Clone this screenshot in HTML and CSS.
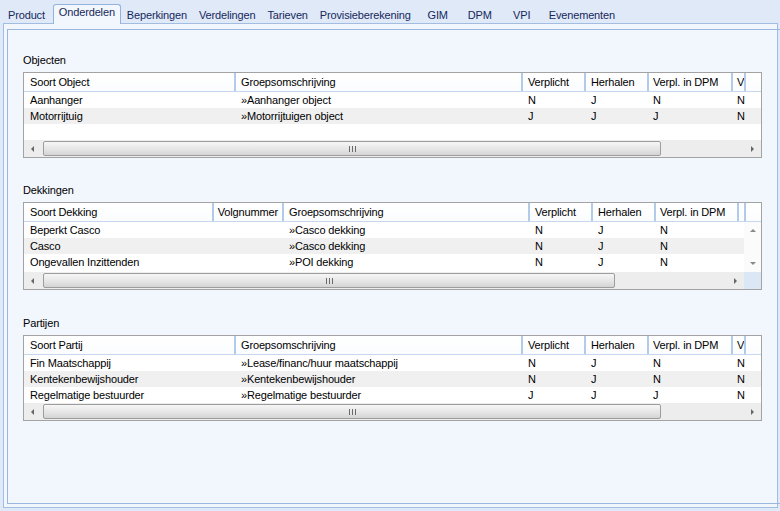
FILE: index.html
```html
<!DOCTYPE html>
<html lang="nl">
<head>
<meta charset="utf-8">
<title>Onderdelen</title>
<link rel="stylesheet" href="styles.css">
</head>
<body>
<div class="window">
  <div class="tabs">
    <div class="tab">Product</div>
    <div class="tab active">Onderdelen</div>
    <div class="tab">Beperkingen</div>
    <div class="tab">Verdelingen</div>
    <div class="tab">Tarieven</div>
    <div class="tab">Provisieberekening</div>
    <div class="tab">GIM</div>
    <div class="tab">DPM</div>
    <div class="tab">VPI</div>
    <div class="tab">Evenementen</div>
  </div>
  <div class="panel">
    <div class="page">

      <section class="group">
        <div class="caption">Objecten</div>
        <div class="grid">
          <div class="head cols-a">
            <div class="hc first">Soort Object</div>
            <div class="hc">Groepsomschrijving</div>
            <div class="hc">Verplicht</div>
            <div class="hc">Herhalen</div>
            <div class="hc narrow">Verpl. in DPM</div>
            <div class="hc narrow">V</div>
            <div class="hc fill"></div>
          </div>
          <div class="rows">
            <div class="row cols-a"><div class="c first">Aanhanger</div><div class="c">»Aanhanger object</div><div class="c">N</div><div class="c">J</div><div class="c narrow">N</div><div class="c narrow">N</div></div>
            <div class="row alt cols-a"><div class="c first">Motorrijtuig</div><div class="c">»Motorrijtuigen object</div><div class="c">J</div><div class="c">J</div><div class="c narrow">J</div><div class="c narrow">N</div></div>
            <div class="row cols-a"></div>
          </div>
          <div class="hscroll">
            <div class="sbtn"><span class="arr-left"></span></div>
            <div class="track"><div class="thumb wide"><span class="grip"></span></div></div>
            <div class="sbtn"><span class="arr-right"></span></div>
          </div>
        </div>
      </section>

      <section class="group g-dek">
        <div class="caption">Dekkingen</div>
        <div class="grid">
          <div class="head cols-b">
            <div class="hc first">Soort Dekking</div>
            <div class="hc num">Volgnummer</div>
            <div class="hc">Groepsomschrijving</div>
            <div class="hc">Verplicht</div>
            <div class="hc">Herhalen</div>
            <div class="hc narrow">Verpl. in DPM</div>
            <div class="hc"></div>
            <div class="hc fill"></div>
          </div>
          <div class="body">
            <div class="rows">
              <div class="row cols-b"><div class="c first">Beperkt Casco</div><div class="c"></div><div class="c">»Casco dekking</div><div class="c">N</div><div class="c">J</div><div class="c narrow">N</div></div>
              <div class="row alt cols-b"><div class="c first">Casco</div><div class="c"></div><div class="c">»Casco dekking</div><div class="c">N</div><div class="c">J</div><div class="c narrow">N</div></div>
              <div class="row cols-b"><div class="c first">Ongevallen Inzittenden</div><div class="c"></div><div class="c">»POI dekking</div><div class="c">N</div><div class="c">J</div><div class="c narrow">N</div></div>
            </div>
            <div class="vscroll">
              <div class="vbtn"><span class="arr-up"></span></div>
              <div class="vbtn"><span class="arr-down"></span></div>
            </div>
          </div>
          <div class="hbar">
            <div class="hscroll">
              <div class="sbtn"><span class="arr-left"></span></div>
              <div class="track"><div class="thumb short"><span class="grip"></span></div></div>
              <div class="sbtn"><span class="arr-right"></span></div>
            </div>
            <div class="corner"></div>
          </div>
        </div>
      </section>

      <section class="group g-par">
        <div class="caption">Partijen</div>
        <div class="grid">
          <div class="head cols-a">
            <div class="hc first">Soort Partij</div>
            <div class="hc">Groepsomschrijving</div>
            <div class="hc">Verplicht</div>
            <div class="hc">Herhalen</div>
            <div class="hc narrow">Verpl. in DPM</div>
            <div class="hc narrow">V</div>
            <div class="hc fill"></div>
          </div>
          <div class="rows">
            <div class="row cols-a"><div class="c first">Fin Maatschappij</div><div class="c">»Lease/financ/huur maatschappij</div><div class="c">N</div><div class="c">J</div><div class="c narrow">N</div><div class="c narrow">N</div></div>
            <div class="row alt cols-a"><div class="c first">Kentekenbewijshouder</div><div class="c">»Kentekenbewijshouder</div><div class="c">N</div><div class="c">J</div><div class="c narrow">N</div><div class="c narrow">N</div></div>
            <div class="row cols-a"><div class="c first">Regelmatige bestuurder</div><div class="c">»Regelmatige bestuurder</div><div class="c">J</div><div class="c">J</div><div class="c narrow">J</div><div class="c narrow">N</div></div>
          </div>
          <div class="hscroll">
            <div class="sbtn"><span class="arr-left"></span></div>
            <div class="track"><div class="thumb wide"><span class="grip"></span></div></div>
            <div class="sbtn"><span class="arr-right"></span></div>
          </div>
        </div>
      </section>

    </div>
  </div>
</div>
</body>
</html>
```

FILE: styles.css
```css
html, body {
  margin: 0;
  padding: 0;
}
body {
  background: #dfe9f8;
  font-family: "Liberation Sans", Arial, sans-serif;
  font-size: 11px;
  letter-spacing: -0.15px;
  color: #000;
}
.window {
  width: 780px;
  height: 511px;
  box-sizing: border-box;
  padding: 0 2px 3px 3px;
  display: flex;
  flex-direction: column;
}

/* Tabs */
.tabs {
  height: 23px;
  box-sizing: border-box;
  padding-top: 4px;
  margin-left: -1px;
  display: flex;
  align-items: flex-end;
  flex: none;
}
.tab {
  height: 16px;
  line-height: 16px;
  padding: 0 6px;
  min-width: 42px;
  box-sizing: border-box;
  text-align: center;
  white-space: nowrap;
  color: #16285a;
}
.tab.active {
  position: relative;
  z-index: 1;
  height: 20px;
  margin-bottom: -1px;
  margin-left: 2px;
  padding: 0 5px 5px;
  line-height: 14px;
  border: 1px solid #94b2dd;
  border-bottom: none;
  border-radius: 3px 3px 0 0;
  background: #f2f6fd;
}

/* Panel */
.panel {
  flex: 1;
  display: flex;
  border: 1px solid #a2bde3;
  background: #f2f6fd;
  padding: 5px 3px 3px 3px;
}
.page {
  flex: 1;
  border: 1px solid #9ab7df;
  padding: 23px 23px 0 15px;
  display: flex;
  flex-direction: column;
}
.group.g-dek { margin-top: 25px; }
.group.g-par { margin-top: 26px; }
.caption {
  line-height: 14px;
  height: 14px;
  margin-bottom: 5px;
}

/* Grid */
.grid {
  border: 1px solid #a3a3a3;
  background: #fff;
}
.head {
  display: grid;
  height: 19px;
  box-sizing: border-box;
  border-bottom: 1px solid #c6d7ef;
  background: linear-gradient(#ffffff, #fbfcfe);
}
.cols-a { grid-template-columns: 212px 287px 63px 63px 84px 13px 1fr; }
.cols-b { grid-template-columns: 190px 70px 246px 63px 63px 83px 5px 1fr; }
.hc {
  line-height: 18px;
  padding-left: 5px;
  border-right: 2px solid #b3cbea;
  white-space: nowrap;
  overflow: hidden;
}
.hc.first, .c.first { padding-left: 6px; }
.hc.narrow, .c.narrow { padding-left: 4px; }
.hc.num { padding-left: 0; padding-right: 4px; text-align: right; }
.hc.fill { border-right: none; padding: 0; }
.rows {
  height: 48px;
}
.row {
  display: grid;
  height: 16px;
  line-height: 16px;
  overflow: hidden;
}
.row.alt { background: #f0f0f0; }
.c {
  padding-left: 5px;
  white-space: nowrap;
  overflow: hidden;
}

.body {
  display: flex;
  height: 50px;
}
.body .rows {
  flex: 1;
  overflow: hidden;
}
.vscroll {
  width: 17px;
  flex: none;
  background: #fbfbfb;
  display: flex;
  flex-direction: column;
  justify-content: space-between;
}
.vbtn {
  height: 17px;
  display: flex;
  align-items: center;
  justify-content: center;
}

/* Scrollbars */
.hbar {
  display: flex;
}
.hbar .hscroll { flex: 1; }
.corner {
  width: 17px;
  flex: none;
  background: #dce7f6;
}
.hscroll {
  height: 17px;
  display: flex;
  background: #ededed;
}
.sbtn {
  width: 17px;
  flex: none;
  display: flex;
  align-items: center;
  justify-content: center;
}
.track {
  flex: 1;
  display: flex;
  align-items: center;
  padding-left: 2px;
}
.thumb {
  height: 15px;
  box-sizing: border-box;
  border: 1px solid #9d9d9d;
  border-radius: 2px;
  background: linear-gradient(#f6f6f6, #e4e4e4 60%, #d4d4d4);
  display: flex;
  align-items: center;
  justify-content: center;
}
.thumb.wide { width: 618px; }
.thumb.short { width: 572px; }
.grip {
  width: 1px;
  height: 6px;
  background: #6a6a6a;
  box-shadow: 3px 0 #6a6a6a, -3px 0 #6a6a6a;
}
.arr-left, .arr-right, .arr-up, .arr-down {
  width: 0;
  height: 0;
}
.arr-left {
  border-top: 3px solid transparent;
  border-bottom: 3px solid transparent;
  border-right: 3px solid #666;
}
.arr-right {
  border-top: 3px solid transparent;
  border-bottom: 3px solid transparent;
  border-left: 3px solid #666;
}
.arr-up {
  border-left: 3px solid transparent;
  border-right: 3px solid transparent;
  border-bottom: 3px solid #888;
}
.arr-down {
  border-left: 3px solid transparent;
  border-right: 3px solid transparent;
  border-top: 3px solid #888;
}
```
